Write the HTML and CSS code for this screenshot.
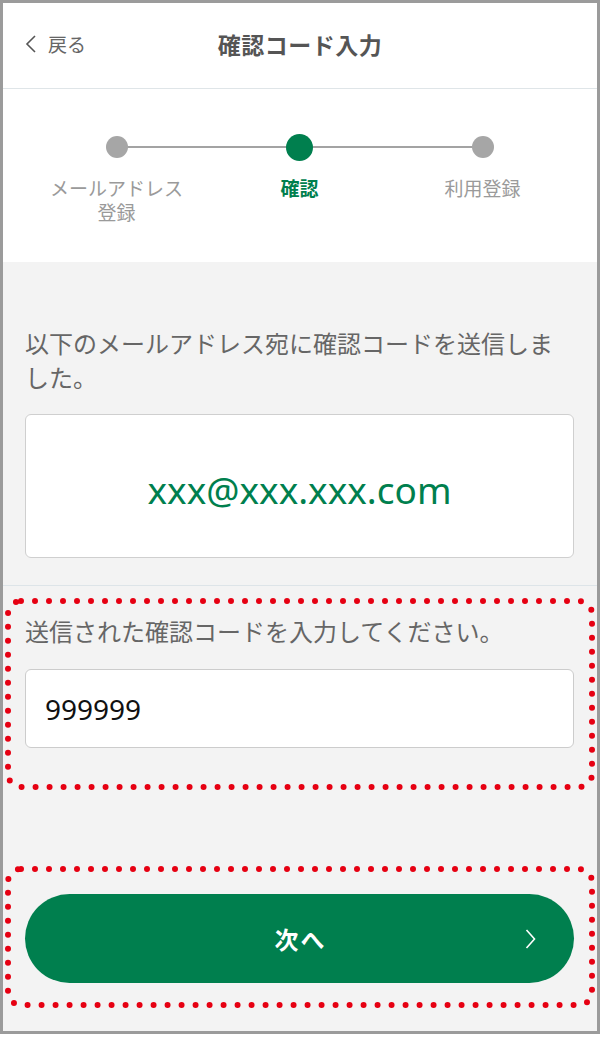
FILE: index.html
```html
<!DOCTYPE html>
<html lang="ja">
<head>
<meta charset="utf-8">
<title>確認コード入力</title>
<link rel="stylesheet" href="styles.css">
</head>
<body>
<div class="frame">
  <header class="topbar">
    <a class="back">
      <svg class="back-icon" viewBox="0 0 12 18" width="12" height="18"><polyline points="10,1 2,9 10,17"/></svg>
      <span>戻る</span>
    </a>
    <h1 class="title">確認コード入力</h1>
    <span></span>
  </header>

  <section class="stepper">
    <div class="steps">
      <div class="step">
        <div class="dot-wrap"><span class="dot"></span></div>
        <div class="label"><span class="label-line">メールアドレス</span><span class="label-line">登録</span></div>
      </div>
      <div class="step active">
        <div class="dot-wrap"><span class="dot"></span></div>
        <div class="label"><span class="label-line">確認</span></div>
      </div>
      <div class="step">
        <div class="dot-wrap"><span class="dot"></span></div>
        <div class="label"><span class="label-line">利用登録</span></div>
      </div>
    </div>
  </section>

  <main class="content">
    <p class="lead">以下のメールアドレス宛に確認コードを送信しました。</p>
    <div class="email-box">xxx@xxx.xxx.com</div>
    <hr class="divider">

    <div class="annot annot-code">
      <svg class="ring"><rect class="ring-rect" x="3" y="3" rx="13" ry="13"/></svg>
      <p class="hint">送信された確認コードを入力してください。</p>
      <div class="code-input">999999</div>
    </div>

    <div class="annot annot-btn">
      <svg class="ring"><rect class="ring-rect" x="3" y="3" rx="13" ry="13"/></svg>
      <button class="next">
        <span></span>
        <span class="next-label">次へ</span>
        <svg class="next-icon" viewBox="0 0 11 20" width="11" height="20"><polyline points="1.5,1 9.5,10 1.5,19"/></svg>
      </button>
    </div>
  </main>
</div>
</body>
</html>
```

FILE: styles.css
```css
* { box-sizing: border-box; }

html, body {
  margin: 0;
  padding: 0;
  background: #ffffff;
}

body {
  font-family: "Noto Sans", "Noto Sans CJK JP", sans-serif;
}

.frame {
  width: 600px;
  height: 1034px;
  border: 3px solid #9b9b9b;
  display: flex;
  flex-direction: column;
  background: #ffffff;
}

/* header */
.topbar {
  height: 86px;
  border-bottom: 1px solid #dfe5e8;
  display: grid;
  grid-template-columns: 1fr auto 1fr;
  align-items: center;
  padding: 0 22px 4px 22px;
  font-family: "Noto Sans CJK JP", sans-serif;
}

.back {
  display: flex;
  align-items: center;
  gap: 11px;
  color: #666666;
  font-size: 19px;
}

.back-icon polyline {
  fill: none;
  stroke: #555555;
  stroke-width: 1.6;
}

.title {
  margin: 0;
  font-size: 23px;
  font-weight: 700;
  color: #555555;
  letter-spacing: 0.5px;
}

/* stepper */
.stepper {
  height: 173px;
  padding: 45px 23px 0 22px;
  font-family: "Noto Sans CJK JP", sans-serif;
}

.steps {
  position: relative;
  display: grid;
  grid-template-columns: repeat(3, 1fr);
}

.steps::before {
  content: "";
  position: absolute;
  top: 12px;
  left: 16.666%;
  right: 16.666%;
  height: 2px;
  background: #a3a3a3;
}

.step {
  display: flex;
  flex-direction: column;
  align-items: center;
}

.dot-wrap {
  height: 26px;
  display: flex;
  align-items: center;
  justify-content: center;
  position: relative;
}

.dot {
  width: 22px;
  height: 22px;
  border-radius: 50%;
  background: #a6a6a6;
}

.step.active .dot {
  width: 27px;
  height: 27px;
  background: #007f4e;
}

.label {
  margin-top: 16px;
  display: flex;
  flex-direction: column;
  align-items: center;
  font-size: 19px;
  color: #9a9a9a;
  text-align: center;
}

.label-line {
  display: block;
  height: 24px;
  line-height: 24px;
  overflow: visible;
}

.step.active .label {
  color: #007f4e;
  font-weight: 700;
}

/* content */
.content {
  flex: 1;
  background: #f3f3f3;
  padding: 64px 23px 23px 22px;
  font-family: "Noto Sans CJK JP", sans-serif;
}

.lead {
  margin: 0;
  font-size: 24px;
  line-height: 34px;
  color: #666666;
}

.email-box {
  margin-top: 20px;
  height: 144px;
  background: #ffffff;
  border: 1px solid #cfcfcf;
  border-radius: 6px;
  display: flex;
  align-items: center;
  justify-content: center;
  padding-top: 6px;
  font-family: "Noto Sans", sans-serif;
  font-size: 37px;
  color: #007f4e;
}

.divider {
  margin: 27px -23px 0 -22px;
  border: 0;
  height: 1px;
  background: #dde4e8;
}

.annot {
  position: relative;
  margin: 0 -21px 0 -20px;
}

.ring {
  position: absolute;
  top: 0;
  left: 0;
  width: 100%;
  height: 100%;
  pointer-events: none;
  overflow: visible;
}

.ring-rect {
  width: calc(100% - 6px);
  height: calc(100% - 6px);
  fill: none;
  stroke: #e60012;
  stroke-width: 6;
  stroke-dasharray: 0 14;
  stroke-linecap: round;
}

.annot-code {
  margin-top: 12px;
  padding: 16px 21px 42px 20px;
}

.hint {
  margin: 0;
  font-size: 24px;
  line-height: 34px;
  color: #666666;
}

.code-input {
  margin-top: 21px;
  height: 79px;
  background: #ffffff;
  border: 1px solid #cccccc;
  border-radius: 6px;
  display: flex;
  align-items: center;
  padding-left: 19px;
  font-family: "Noto Sans", sans-serif;
  font-size: 28px;
  color: #111111;
}

.annot-btn {
  margin-top: 76px;
  padding: 28px 21px 25px 20px;
}

.next {
  width: 100%;
  height: 89px;
  border: 0;
  border-radius: 45px;
  background: #007f4e;
  display: grid;
  grid-template-columns: 1fr auto 1fr;
  align-items: center;
  padding: 0 38px;
  font-family: "Noto Sans CJK JP", sans-serif;
  color: #ffffff;
}

.next-label {
  font-size: 24px;
  font-weight: 700;
  letter-spacing: 2px;
  padding-left: 2px;
}

.next-icon {
  justify-self: end;
}

.next-icon polyline {
  fill: none;
  stroke: #ffffff;
  stroke-width: 1.6;
}
```
